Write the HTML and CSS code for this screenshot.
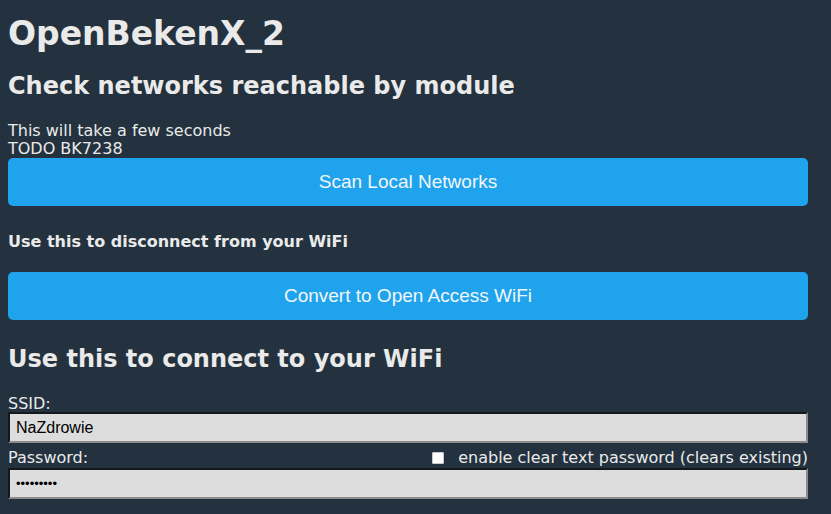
FILE: index.html
```html
<!DOCTYPE html>
<html>
<head>
<meta charset="utf-8">
<title>OpenBekenX_2</title>
<link rel="stylesheet" href="styles.css">
</head>
<body>
<div class="page">
  <h1 class="title">OpenBekenX_2</h1>
  <h2 class="section">Check networks reachable by module</h2>
  <div class="note">This will take a few seconds<br>TODO BK7238</div>
  <button class="btn">Scan Local Networks</button>
  <p class="hint">Use this to disconnect from your WiFi</p>
  <button class="btn btn-second">Convert to Open Access WiFi</button>
  <h2 class="section section-connect">Use this to connect to your WiFi</h2>
  <form class="wifi-form">
    <label class="field-label" for="ssid">SSID:</label>
    <input class="field" id="ssid" type="text" value="NaZdrowie">
    <div class="pass-row">
      <label class="field-label" for="pass">Password:</label>
      <label class="clear-opt"><input class="check" type="checkbox"><span>enable clear text password (clears existing)</span></label>
    </div>
    <input class="field field-pass" id="pass" type="password" value="123456789">
  </form>
</div>
</body>
</html>
```

FILE: styles.css
```css
html, body {
  margin: 0;
  padding: 0;
  background: #23323e;
}
body {
  color: #eaeaea;
  font-family: "DejaVu Sans", Verdana, sans-serif;
  font-size: 16px;
}
.page {
  width: 800px;
  margin-left: 8px;
  padding-top: 15px;
}
.title {
  margin: 0;
  font-size: 33px;
  line-height: 38px;
  font-weight: bold;
}
.section {
  margin: 19px 0 0;
  font-size: 24px;
  line-height: 28px;
  font-weight: bold;
}
.note {
  margin-top: 22px;
  line-height: 18px;
}
.btn {
  display: block;
  width: 100%;
  height: 48px;
  margin: 0;
  padding: 0;
  border: 0;
  border-radius: 5px;
  background: #1fa3ec;
  color: #f2f6fa;
  font-family: "Liberation Sans", Arial, sans-serif;
  font-size: 19px;
}
.hint {
  margin: 27px 0 0;
  font-weight: bold;
  line-height: 18px;
}
.btn-second {
  margin-top: 21px;
}
.section-connect {
  margin-top: 25px;
}
.wifi-form {
  margin: 22px 0 0;
}
.field-label {
  display: block;
  line-height: 17px;
}
.field {
  display: block;
  box-sizing: border-box;
  width: 100%;
  height: 31px;
  margin: 0;
  padding: 0 6px;
  background: #dddddd;
  color: #000;
  font-family: "Liberation Sans", Arial, sans-serif;
  font-size: 16px;
  border-style: solid;
  border-width: 2px;
  border-color: #15191d #8c8c8c #8c8c8c #15191d;
  outline: none;
}
.field-pass {
  font-size: 13px;
}
.pass-row {
  display: flex;
  justify-content: space-between;
  align-items: flex-end;
  padding-top: 6px;
  margin-bottom: 1px;
  line-height: 18px;
}
.pass-row .field-label {
  line-height: 18px;
}
.clear-opt {
  display: flex;
  align-items: center;
  gap: 14px;
}
.check {
  appearance: none;
  -webkit-appearance: none;
  width: 12px;
  height: 12px;
  margin: 0;
  background: #ffffff;
  border: 1px solid #c8c8c8;
  border-radius: 1px;
}
```
